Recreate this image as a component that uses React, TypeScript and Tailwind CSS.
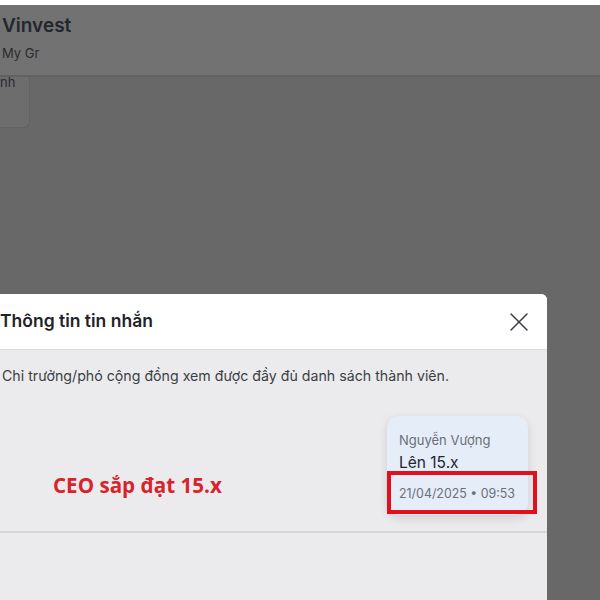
import { X } from "lucide-react";

export default function App() {
  return (
    <div
      className="relative h-[600px] w-[600px] overflow-hidden bg-[#686868]"
      style={{ fontFamily: "Inter, 'Noto Sans', sans-serif" }}
    >
      {/* dimmed page behind the modal */}
      <div className="h-[5px] bg-white" />
      <div className="flex h-[72px] flex-col border-b-2 border-[#616161] bg-[#727272] pl-[2px]">
        <div className="mt-[9px] text-[19px] font-semibold leading-[24px] text-[#23272d]">Vinvest</div>
        <div className="mt-[6px] text-[13px] leading-[18px] text-[#2a2c30]">My Gr</div>
      </div>
      <div className="flex h-[51px] w-[30px] items-start rounded-br-md border-r border-b border-[#626262] bg-[#6d6d6d]">
        <span className="-mt-[3px] text-[13px] leading-[16px] text-[#2a2c30]">nh</span>
      </div>

      {/* modal */}
      <div className="absolute left-[-24px] top-[294px] bottom-0 flex w-[571px] flex-col overflow-hidden rounded-tr-md bg-[#ebebed]">
        <div className="flex h-[56px] shrink-0 items-center justify-between border-b border-[#dcdcdf] bg-white pl-6 pr-[12px]">
          <span className="text-[17.5px] font-semibold text-[#1f2329]">Thông tin tin nhắn</span>
          <X size={32} strokeWidth={1.1} className="text-[#3a3d42]" />
        </div>
        <div className="flex h-[183px] shrink-0 flex-col border-b-2 border-[#d6d6d8] pl-[26px] pr-[19px]">
          <p className="mt-[17px] text-[14.2px] leading-[18px] text-[#3b3f45]">
            Chỉ trưởng/phó cộng đồng xem được đầy đủ danh sách thành viên.
          </p>
          <div className="mt-[31px] flex justify-end">
            <div className="flex h-[99px] w-[141px] flex-col rounded-xl bg-[#e5edf9] px-3 pt-[15px] shadow-[0_3px_10px_rgba(0,0,0,0.12)]">
              <span className="text-[13px] leading-[18px] text-[#6b7078]">Nguyễn Vượng</span>
              <span className="mt-[4px] text-[15.5px] leading-[20px] text-[#23272d]">Lên 15.x</span>
              <span className="mt-[13px] text-[12.4px] leading-[16px] text-[#6b7078]">21/04/2025 • 09:53</span>
            </div>
          </div>
        </div>
      </div>

      {/* annotation overlay */}
      <span
        className="absolute left-[53px] top-[470px] text-[20.6px] font-bold text-[#d9232b]"
        style={{ fontFamily: "'Open Sans', sans-serif" }}
      >
        CEO sắp đạt 15.x
      </span>
      <div className="absolute left-[387px] top-[471px] h-[43px] w-[150px] border-[4px] border-[#e2101c]" />
    </div>
  );
}
